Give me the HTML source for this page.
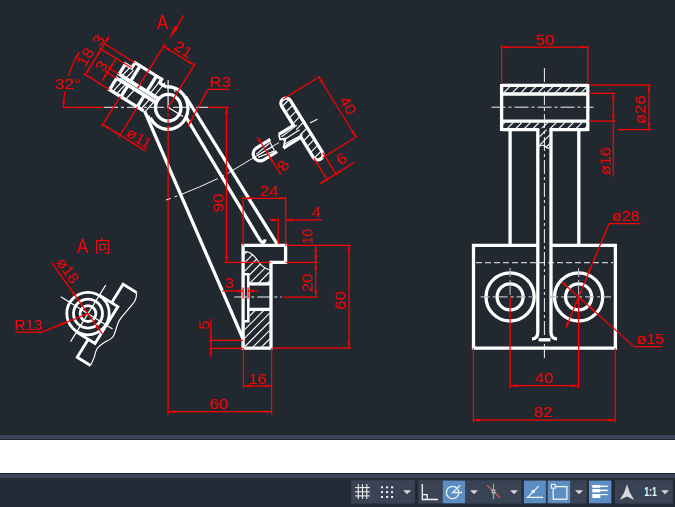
<!DOCTYPE html>
<html><head><meta charset="utf-8"><title>CAD</title>
<style>
html,body{margin:0;padding:0;background:#212830;}
body{width:675px;height:507px;overflow:hidden;position:relative;font-family:"Liberation Sans","Noto Sans CJK SC",sans-serif;}
#scr{position:absolute;left:0;top:434.8px;width:675px;height:3.9px;background:#3c4557;}
#cmd{position:absolute;left:0;top:439.6px;width:675px;height:33.2px;background:#ffffff;}
#sep{position:absolute;left:0;top:472.8px;width:675px;height:1px;background:#1d232c;}
#st1{position:absolute;left:0;top:473.8px;width:675px;height:4.2px;background:#3c4557;}
#st2{position:absolute;left:0;top:478.0px;width:675px;height:28.8px;background:#232a35;}
svg{position:absolute;left:0;top:0;}
.w{stroke:#fff;stroke-width:3.3;fill:none;stroke-linejoin:miter;stroke-linecap:butt;}
.av .w{stroke-width:2.8;}
.w2{stroke:#fff;stroke-width:1.8;fill:none;}
.th{stroke:#fff;stroke-width:1.15;fill:none;}
.cg{stroke:#b9bcc0;stroke-width:1.1;fill:none;stroke-dasharray:9 3 3 3;}
.cl{stroke:#fff;stroke-width:1;fill:none;stroke-dasharray:14 3 3 3;opacity:.95;}
.cl2{stroke:#fff;stroke-width:1;fill:none;stroke-dasharray:60 4 3 4 40 4 3 4;opacity:.95;}
.hid{stroke:#fff;stroke-width:1;fill:none;stroke-dasharray:6 3;opacity:.95;}
.r{stroke:#ff0000;stroke-width:1.25;fill:none;}
.t{fill:#ff0000;font-family:"Liberation Sans",sans-serif;stroke:#212830;stroke-width:.12;paint-order:fill stroke;}
.tc{fill:#ff0000;font-family:"Liberation Sans","Noto Sans CJK SC",sans-serif;stroke:#212830;stroke-width:.12;paint-order:fill stroke;}
</style></head><body>
<div id="scr"></div><div id="cmd"></div><div id="sep"></div><div id="st1"></div><div id="st2"></div>
<svg width="675" height="507" viewBox="0 0 675 507">
<ellipse cx="168.2" cy="107.7" rx="12.7" ry="13.3" class="w"/>
<line x1="185.6" y1="96.5" x2="277.2" y2="244.2" class="w"/>
<path d="M186.0,117.0 L259.0,238.5 C261.4,243.1 264.6,243.7 265.0,239.3" class="w"/>
<line x1="144.5" y1="110.8" x2="243.6" y2="340.2" class="w" stroke-linecap="square"/>
<line x1="150.0" y1="116.8" x2="147.5" y2="117.6" class="w"/>
<path d="M166.6,87.0 L167.9,86.9 L169.1,86.9 L170.4,87.0 L171.6,87.2 L172.8,87.5 L174.0,87.9 L175.2,88.3 L176.3,88.8 L177.4,89.4 L178.5,90.0 L179.5,90.8 L180.5,91.6 L181.4,92.4 L182.3,93.4 L183.2,94.3 L183.9,95.4 L184.7,96.5 L185.3,97.6 L185.9,98.8 L186.4,100.0 L186.8,101.2 L187.2,102.5 L187.5,103.8 L187.7,105.1 L187.8,106.4 L187.9,107.7 L187.9,109.1 L187.8,110.4 L187.6,111.7 L187.4,113.0 L187.0,114.3 L186.6,115.5 L186.2,116.7 L185.6,117.9 L185.0,119.1 L184.4,120.2 L183.6,121.3 L182.8,122.3 L182.0,123.2 L181.0,124.1 L180.1,125.0 L179.1,125.7 L178.0,126.4 L176.9,127.1 L175.8,127.6 L174.6,128.1 L173.5,128.5 L172.3,128.8 L171.0,129.1 L169.8,129.2 L168.6,129.3 L167.3,129.3 L166.1,129.2 L164.9,129.0 L163.7,128.8 L162.5,128.4 L161.3,128.0 L160.1,127.5 L159.0,126.9 L157.9,126.3 L156.9,125.6 L155.9,124.8 L154.9,123.9 L154.0,123.0 L153.2,122.1 L152.4,121.0 L151.7,120.0 L151.0,118.8 L150.4,117.7" class="w"/>
<path d="M158.3,98.4 L119.2,74.2 L125.4,64.1 L131.7,68.0 L135.0,62.7 L161.7,79.2 L159.6,82.6 L162.1,84.7 L166.6,87.0" class="w"/>
<path d="M156.2,102.8 L116.6,78.3 L109.6,89.6 L143.7,110.8" class="w"/>
<line x1="140.1" y1="65.8" x2="130.6" y2="81.2" class="w"/>
<line x1="128.0" y1="85.4" x2="121.0" y2="96.7" class="w"/>
<line x1="156.5" y1="76.0" x2="146.9" y2="91.3" class="w"/>
<line x1="144.3" y1="95.5" x2="137.3" y2="106.8" class="w"/>
<line x1="120.9" y1="77.2" x2="158.3" y2="100.4" class="th"/>
<line x1="120.0" y1="78.6" x2="157.4" y2="101.7" class="th"/>
<line x1="122.8" y1="75.0" x2="129.6" y2="67.9" class="th"/>
<line x1="126.7" y1="77.4" x2="133.4" y2="70.3" class="th"/>
<line x1="150.9" y1="92.4" x2="161.0" y2="79.9" class="th"/>
<line x1="155.1" y1="95.0" x2="165.2" y2="82.6" class="th"/>
<line x1="113.7" y1="90.6" x2="121.1" y2="82.5" class="th"/>
<line x1="117.5" y1="93.0" x2="124.9" y2="84.9" class="th"/>
<line x1="126.5" y1="98.5" x2="133.9" y2="90.4" class="th"/>
<line x1="141.8" y1="108.0" x2="149.2" y2="99.9" class="th"/>
<line x1="146.0" y1="110.7" x2="153.4" y2="102.5" class="th"/>
<line x1="104.0" y1="107.3" x2="208.0" y2="107.3" class="cl"/>
<line x1="168.1" y1="80.0" x2="168.1" y2="107.3" class="th"/>
<line x1="174.8" y1="87.3" x2="174.8" y2="92.0" class="th"/>
<line x1="168.1" y1="107.3" x2="183.0" y2="116.5" class="th"/>
<line x1="62.4" y1="107.3" x2="104.0" y2="107.3" class="r"/>
<line x1="208.0" y1="107.3" x2="229.0" y2="107.3" class="r"/>
<line x1="168.1" y1="107.3" x2="168.1" y2="129.0" class="r" stroke-dasharray="4 2"/>
<line x1="168.1" y1="129.0" x2="168.1" y2="414.6" class="r"/>
<line x1="137.5" y1="88.3" x2="165.2" y2="43.7" class="r"/>
<line x1="168.1" y1="107.3" x2="195.8" y2="62.7" class="r"/>
<line x1="163.6" y1="46.3" x2="194.2" y2="65.2" class="r"/>
<polygon points="163.6,46.3 170.1,48.7 168.7,50.9" fill="#ff0000"/>
<polygon points="194.2,65.2 187.7,62.8 189.1,60.5" fill="#ff0000"/>
<text transform="translate(180.0 53.7) rotate(31.8) scale(1.1 1)" font-size="15.2" text-anchor="middle" class="t">21</text>
<line x1="184.0" y1="15.1" x2="170.1" y2="37.3" class="r"/>
<polygon points="170.1,37.3 174.6,26.0 178.3,28.3" fill="#ff0000"/>
<text transform="translate(162.0 28.7) scale(0.85 1)" font-size="19.5" text-anchor="middle" class="t">A</text>
<line x1="208.0" y1="89.4" x2="229.4" y2="89.4" class="r"/>
<line x1="208.0" y1="89.4" x2="188.0" y2="126.1" class="r"/>
<polygon points="188.0,126.1 190.1,119.5 192.4,120.8" fill="#ff0000"/>
<text transform="translate(219.8 86.6) scale(1.1 1)" font-size="15.2" text-anchor="middle" class="t">R3</text>
<path d="M63.6,107.3 L63.6,105.6 L63.7,103.9 L63.7,102.1 L63.8,100.4 L64.0,98.7 L64.1,97.0 L64.3,95.3 L64.5,93.6 L64.7,91.9" class="r"/>
<path d="M68.4,75.9 L69.1,74.0 L69.7,72.1 L70.4,70.2 L71.1,68.3 L71.9,66.5 L72.7,64.6 L73.5,62.8 L74.4,61.0 L75.3,59.2 L76.3,57.4 L77.2,55.7 L78.2,53.9 L79.3,52.2" class="r"/>
<polygon points="63.6,107.3 62.3,100.5 64.9,100.5" fill="#ff0000"/>
<polygon points="79.3,52.2 76.8,58.7 74.6,57.3" fill="#ff0000"/>
<text transform="translate(67.5 89.0) scale(1.1 1)" font-size="15.5" text-anchor="middle" class="t">32°</text>
<line x1="135.0" y1="62.7" x2="102.8" y2="42.7" class="r"/>
<line x1="131.7" y1="68.0" x2="99.5" y2="48.1" class="r"/>
<line x1="109.6" y1="89.6" x2="83.7" y2="73.6" class="r"/>
<line x1="86.0" y1="73.6" x2="108.9" y2="36.7" class="r"/>
<polygon points="85.4,74.6 87.9,68.2 90.1,69.5" fill="#ff0000"/>
<polygon points="101.2,49.1 98.7,55.6 96.5,54.2" fill="#ff0000"/>
<polygon points="104.5,43.8 107.0,37.3 109.2,38.7" fill="#ff0000"/>
<text transform="translate(89.4 59.7) rotate(-58.2) scale(1.1 1)" font-size="15.2" text-anchor="middle" class="t">18</text>
<text transform="translate(102.5 43.1) rotate(-58.2) scale(1.1 1)" font-size="15.2" text-anchor="middle" class="t">3</text>
<line x1="119.2" y1="74.2" x2="107.7" y2="67.1" class="r"/>
<line x1="116.6" y1="78.3" x2="105.2" y2="71.2" class="r"/>
<line x1="102.3" y1="80.6" x2="116.0" y2="58.5" class="r"/>
<polygon points="109.9,68.4 111.4,63.4 113.6,64.8" fill="#ff0000"/>
<polygon points="107.3,72.5 105.8,77.5 103.6,76.1" fill="#ff0000"/>
<text transform="translate(105.4 68.8) rotate(-58.2) scale(1.1 1)" font-size="15.2" text-anchor="middle" class="t">3</text>
<line x1="120.3" y1="96.3" x2="101.7" y2="126.4" class="r"/>
<line x1="137.5" y1="106.9" x2="118.9" y2="137.0" class="r"/>
<line x1="102.0" y1="124.0" x2="145.4" y2="150.9" class="r"/>
<polygon points="102.8,124.5 109.3,127.0 107.9,129.2" fill="#ff0000"/>
<polygon points="120.0,135.1 113.5,132.7 114.9,130.5" fill="#ff0000"/>
<text transform="translate(135.9 142.5) rotate(31.8) scale(1.05 1)" font-size="15.2" text-anchor="middle" class="t">ø11</text>
<path d="M243.1,348.2 L243.1,245.4 L285.6,245.4 L285.6,262.4 L271.0,262.4 L271.0,348.2 L243.1,348.2 Z" class="w"/>
<path d="M243.1,274.3 L248.3,274.3 L248.3,321.3 L244.1,321.3" class="w" style="stroke-width:2.5"/>
<line x1="248.1" y1="283.9" x2="271.0" y2="283.9" class="w"/>
<line x1="248.1" y1="309.4" x2="271.0" y2="309.4" class="w"/>
<clipPath id="h1"><path d="M244.6,251.5 C250,251.5 254,255 258,261 C262,267 266,269 269.5,269.8 L269.5,282.4 L249.6,282.4 L249.6,272.8 L244.6,272.8 Z"/></clipPath>
<clipPath id="h2"><path d="M249.6,310.9 L269.5,310.9 L269.5,346.7 L244.6,346.7 L244.6,322.8 L249.6,322.8 Z"/></clipPath>
<g clip-path="url(#h1)"><line x1="206.0" y1="284.0" x2="245.0" y2="245.0" class="th"/><line x1="214.6" y1="284.0" x2="253.6" y2="245.0" class="th"/><line x1="223.2" y1="284.0" x2="262.2" y2="245.0" class="th"/><line x1="231.8" y1="284.0" x2="270.8" y2="245.0" class="th"/><line x1="240.4" y1="284.0" x2="279.4" y2="245.0" class="th"/><line x1="249.0" y1="284.0" x2="288.0" y2="245.0" class="th"/><line x1="257.6" y1="284.0" x2="296.6" y2="245.0" class="th"/><line x1="266.2" y1="284.0" x2="305.2" y2="245.0" class="th"/></g>
<g clip-path="url(#h2)"><line x1="208.0" y1="349.0" x2="248.0" y2="309.0" class="th"/><line x1="216.6" y1="349.0" x2="256.6" y2="309.0" class="th"/><line x1="225.2" y1="349.0" x2="265.2" y2="309.0" class="th"/><line x1="233.8" y1="349.0" x2="273.8" y2="309.0" class="th"/><line x1="242.4" y1="349.0" x2="282.4" y2="309.0" class="th"/><line x1="251.0" y1="349.0" x2="291.0" y2="309.0" class="th"/><line x1="259.6" y1="349.0" x2="299.6" y2="309.0" class="th"/><line x1="268.2" y1="349.0" x2="308.2" y2="309.0" class="th"/></g>
<path d="M244.6,251.5 C250,251.5 254,255 258,261 C262,267 266,269 270,270" class="th"/>
<line x1="234.3" y1="297.0" x2="281.7" y2="297.0" class="cl"/>
<line x1="283.5" y1="297.0" x2="317.6" y2="297.0" class="r"/>
<path d="M279,142.5 L224,175.5 Q195,190 166,200" class="cl2"/>
<line x1="226.5" y1="107.3" x2="226.5" y2="262.4" class="r"/>
<polygon points="226.5,107.3 227.8,114.1 225.2,114.1" fill="#ff0000"/>
<polygon points="226.5,262.4 225.2,255.6 227.8,255.6" fill="#ff0000"/>
<line x1="224.4" y1="262.4" x2="243.1" y2="262.4" class="r"/>
<line x1="243.1" y1="262.4" x2="270.6" y2="262.4" class="r"/>
<line x1="285.6" y1="262.4" x2="317.6" y2="262.4" class="r"/>
<text transform="translate(222.5 203.0) rotate(-90.0) scale(1.1 1)" font-size="15.2" text-anchor="middle" class="t">90</text>
<line x1="243.1" y1="196.2" x2="243.1" y2="245.4" class="r"/>
<line x1="285.7" y1="196.2" x2="285.7" y2="245.4" class="r"/>
<line x1="243.1" y1="198.3" x2="285.7" y2="198.3" class="r"/>
<polygon points="243.1,198.3 249.9,197.0 249.9,199.6" fill="#ff0000"/>
<polygon points="285.7,198.3 278.9,199.6 278.9,197.0" fill="#ff0000"/>
<text transform="translate(268.7 196.0) scale(1.1 1)" font-size="15.2" text-anchor="middle" class="t">24</text>
<line x1="269.4" y1="219.9" x2="278.2" y2="219.9" class="r"/>
<polygon points="278.2,219.9 271.4,221.2 271.4,218.6" fill="#ff0000"/>
<line x1="285.7" y1="219.9" x2="322.0" y2="219.9" class="r"/>
<polygon points="285.7,219.9 292.5,218.6 292.5,221.2" fill="#ff0000"/>
<line x1="278.2" y1="218.0" x2="278.2" y2="244.0" class="r"/>
<text transform="translate(316.0 217.2) scale(1.1 1)" font-size="15.2" text-anchor="middle" class="t">4</text>
<line x1="286.5" y1="245.4" x2="350.9" y2="245.4" class="r"/>
<line x1="315.7" y1="245.4" x2="315.7" y2="297.0" class="r"/>
<polygon points="315.7,245.4 317.0,252.2 314.4,252.2" fill="#ff0000"/>
<polygon points="315.7,262.4 314.4,255.6 317.0,255.6" fill="#ff0000"/>
<polygon points="315.7,262.4 317.0,269.2 314.4,269.2" fill="#ff0000"/>
<polygon points="315.7,297.0 314.4,290.2 317.0,290.2" fill="#ff0000"/>
<text transform="translate(312.0 244.0) rotate(-90.0) scale(0.88 1)" font-size="15.2" text-anchor="start" class="t">10</text>
<text transform="translate(311.8 283.0) rotate(-90.0) scale(1.1 1)" font-size="15.2" text-anchor="middle" class="t">20</text>
<line x1="349.0" y1="245.4" x2="349.0" y2="348.1" class="r"/>
<polygon points="349.0,245.4 350.3,252.2 347.7,252.2" fill="#ff0000"/>
<polygon points="349.0,348.1 347.7,341.3 350.3,341.3" fill="#ff0000"/>
<line x1="272.4" y1="348.1" x2="350.9" y2="348.1" class="r"/>
<text transform="translate(345.1 300.5) rotate(-90.0) scale(1.1 1)" font-size="15.2" text-anchor="middle" class="t">60</text>
<line x1="222.4" y1="290.9" x2="243.1" y2="290.9" class="r"/>
<polygon points="243.1,290.9 238.1,292.2 238.1,289.6" fill="#ff0000"/>
<line x1="248.1" y1="290.9" x2="258.0" y2="290.9" class="r"/>
<polygon points="248.1,290.9 253.1,289.6 253.1,292.2" fill="#ff0000"/>
<line x1="243.1" y1="287.5" x2="243.1" y2="298.5" class="r"/>
<line x1="248.1" y1="287.5" x2="248.1" y2="298.5" class="r"/>
<text transform="translate(229.0 288.3) scale(1.1 1)" font-size="15.2" text-anchor="middle" class="t">3</text>
<line x1="210.9" y1="318.9" x2="210.9" y2="357.4" class="r"/>
<line x1="209.4" y1="340.3" x2="243.1" y2="340.3" class="r"/>
<line x1="209.4" y1="348.3" x2="243.1" y2="348.3" class="r"/>
<polygon points="210.9,340.3 209.6,335.3 212.2,335.3" fill="#ff0000"/>
<polygon points="210.9,348.3 212.2,353.3 209.6,353.3" fill="#ff0000"/>
<text transform="translate(208.5 325.0) rotate(-90.0) scale(1.1 1)" font-size="15.2" text-anchor="middle" class="t">5</text>
<line x1="243.5" y1="348.2" x2="243.5" y2="388.6" class="r"/>
<line x1="271.6" y1="348.2" x2="271.6" y2="414.6" class="r"/>
<line x1="243.5" y1="386.0" x2="271.6" y2="386.0" class="r"/>
<polygon points="243.5,386.0 250.3,384.7 250.3,387.3" fill="#ff0000"/>
<polygon points="271.6,386.0 264.8,387.3 264.8,384.7" fill="#ff0000"/>
<text transform="translate(257.2 383.6) scale(1.05 1)" font-size="15.2" text-anchor="middle" class="t">16</text>
<line x1="168.1" y1="411.6" x2="271.6" y2="411.6" class="r"/>
<polygon points="168.1,411.6 174.9,410.3 174.9,412.9" fill="#ff0000"/>
<polygon points="271.6,411.6 264.8,412.9 264.8,410.3" fill="#ff0000"/>
<text transform="translate(218.5 409.4) scale(1.1 1)" font-size="15.2" text-anchor="middle" class="t">60</text>
<path d="M278.8,134.4 L293.5,125.3 L281.6,106.2 A5.2,5.2 0 0 1 290.5,100.7 L322.2,151.8 A5.2,5.2 0 0 1 313.3,157.3 L300.9,137.2 L283.4,148.0" class="w"/>
<path d="M278.8,134.4 L280.1,139.4 L285.4,138.5 L283.4,148.0" class="w2"/>
<line x1="281.6" y1="136.7" x2="296.9" y2="125.1" class="th"/>
<line x1="282.9" y1="140.4" x2="299.7" y2="129.7" class="th"/>
<line x1="284.2" y1="144.2" x2="302.7" y2="134.4" class="th"/>
<clipPath id="hb"><path d="M281.6,106.2 A5.2,5.2 0 0 1 290.5,100.7 L322.2,151.8 A5.2,5.2 0 0 1 313.3,157.3 Z"/></clipPath>
<g clip-path="url(#hb)"><line x1="200.0" y1="170" x2="280.0" y2="90" class="th"/><line x1="209.3" y1="170" x2="289.3" y2="90" class="th"/><line x1="218.6" y1="170" x2="298.6" y2="90" class="th"/><line x1="227.9" y1="170" x2="307.9" y2="90" class="th"/><line x1="237.2" y1="170" x2="317.2" y2="90" class="th"/><line x1="246.5" y1="170" x2="326.5" y2="90" class="th"/><line x1="255.8" y1="170" x2="335.8" y2="90" class="th"/><line x1="265.1" y1="170" x2="345.1" y2="90" class="th"/><line x1="274.4" y1="170" x2="354.4" y2="90" class="th"/><line x1="283.7" y1="170" x2="363.7" y2="90" class="th"/><line x1="293.0" y1="170" x2="373.0" y2="90" class="th"/><line x1="302.3" y1="170" x2="382.3" y2="90" class="th"/><line x1="311.6" y1="170" x2="391.6" y2="90" class="th"/><line x1="320.9" y1="170" x2="400.9" y2="90" class="th"/></g>
<line x1="310.0" y1="123.0" x2="317.4" y2="119.3" class="th"/>
<path d="M270.3,139.4 L256.0,148.3 A7.0,7.0 0 0 0 263.4,160.1 L277.0,151.7" class="w"/>
<line x1="269.3" y1="140.9" x2="274.5" y2="150.7" class="th"/>
<line x1="256.3" y1="154.4" x2="269.4" y2="143.3" class="th"/>
<line x1="257.2" y1="155.8" x2="271.8" y2="147.1" class="th"/>
<line x1="258.1" y1="157.4" x2="274.2" y2="151.0" class="th"/>
<line x1="257.3" y1="137.0" x2="280.7" y2="174.3" class="r"/>
<polygon points="262.0,144.5 258.0,140.6 260.2,139.2" fill="#ff0000"/>
<polygon points="269.4,156.4 273.4,160.4 271.2,161.8" fill="#ff0000"/>
<text transform="translate(287.3 168.2) rotate(-58.2) scale(1.1 1)" font-size="15.2" text-anchor="middle" class="t">8</text>
<line x1="283.3" y1="99.0" x2="320.1" y2="76.2" class="r"/>
<line x1="322.6" y1="157.7" x2="357.3" y2="136.2" class="r"/>
<line x1="318.8" y1="77.0" x2="356.0" y2="137.0" class="r"/>
<polygon points="318.8,77.0 323.5,82.1 321.3,83.4" fill="#ff0000"/>
<polygon points="356.0,137.0 351.3,131.9 353.6,130.5" fill="#ff0000"/>
<text transform="translate(343.1 108.2) rotate(58.2) scale(1.1 1)" font-size="15.2" text-anchor="middle" class="t">40</text>
<line x1="313.9" y1="158.2" x2="327.8" y2="180.7" class="r"/>
<line x1="322.7" y1="152.7" x2="336.7" y2="175.2" class="r"/>
<line x1="319.8" y1="183.9" x2="354.6" y2="162.3" class="r"/>
<polygon points="327.0,179.4 323.1,183.4 321.7,181.2" fill="#ff0000"/>
<polygon points="335.9,173.9 339.9,169.9 341.2,172.1" fill="#ff0000"/>
<text transform="translate(344.0 163.3) rotate(-31.8) scale(1.1 1)" font-size="15.2" text-anchor="middle" class="t">6</text>
<g class="av">
<circle cx="88.0" cy="313.6" r="7.9" class="w"/>
<circle cx="88.0" cy="313.6" r="14.5" class="w"/>
<circle cx="88.0" cy="313.6" r="21.2" class="w"/>
<path d="M99.4,295.2 L117.9,306.6 L95.0,343.5 L76.6,332.0" class="w"/>
<path d="M111.6,302.7 L123.1,284.2 L136.7,292.6" class="w"/>
<path d="M88.3,339.3 L77.2,357.2 L90.5,365.5" class="w"/>
<path d="M136.6,292.8 C136.4,294.0 136.7,297.1 135.3,299.9 C134.0,302.6 131.1,305.8 128.4,309.2 C125.7,312.7 121.8,316.0 119.2,320.6 C116.6,325.2 115.5,333.1 113.0,336.8 C110.5,340.4 106.9,340.5 104.2,342.5 C101.5,344.5 98.7,346.2 97.0,348.8 C95.2,351.5 94.9,355.6 93.8,358.4 C92.7,361.1 91.1,364.3 90.5,365.5" class="th"/>
<line x1="105.7" y1="285.1" x2="70.6" y2="341.6" class="th"/>
<line x1="60.8" y1="296.7" x2="112.6" y2="328.9" class="th"/>
<line x1="52.1" y1="263.1" x2="102.4" y2="333.8" class="r"/>
<polygon points="76.7,297.7 71.7,292.9 73.8,291.4" fill="#ff0000"/>
<polygon points="100.4,331.1 95.5,326.3 97.6,324.8" fill="#ff0000"/>
<text transform="translate(63.2 273.6) rotate(54.6) scale(1.05 1)" font-size="15.2" text-anchor="middle" class="t">ø18</text>
<line x1="15.0" y1="332.2" x2="41.7" y2="332.2" class="r"/>
<line x1="41.7" y1="332.2" x2="88.0" y2="313.6" class="r"/>
<polygon points="67.1,322.0 61.3,325.7 60.3,323.3" fill="#ff0000"/>
<text transform="translate(28.0 329.6) scale(1.0 1)" font-size="15.2" text-anchor="middle" class="t">R13</text>
<text transform="translate(82.2 253.0) scale(0.85 1)" font-size="19.8" text-anchor="middle" class="t">A</text>
<text transform="translate(102.0 252.3) scale(1.0 1)" font-size="16.5" text-anchor="middle" class="tc">向</text>
</g>
<line x1="501.6" y1="85.4" x2="587.8" y2="85.4" class="w"/>
<line x1="501.6" y1="94.0" x2="587.8" y2="94.0" class="w"/>
<line x1="501.6" y1="121.2" x2="587.8" y2="121.2" class="w"/>
<line x1="501.6" y1="129.6" x2="539.3" y2="129.6" class="w"/>
<line x1="549.5" y1="129.6" x2="587.8" y2="129.6" class="w"/>
<line x1="501.6" y1="84.0" x2="501.6" y2="131.0" class="w"/>
<line x1="587.8" y1="84.0" x2="587.8" y2="131.0" class="w"/>
<clipPath id="r1"><rect x="503" y="86.8" width="83.4" height="5.8"/></clipPath>
<clipPath id="r2"><rect x="503" y="122.6" width="83.4" height="5.6"/></clipPath>
<clipPath id="r3"><path d="M539.5,129 L549.6,129 L549.6,147 Q547,149 545.5,146.5 Q543,144 539.5,146.5 Z"/></clipPath>
<g clip-path="url(#r1)"><line x1="493.9" y1="94.0" x2="502.5" y2="85.4" class="th"/><line x1="502.5" y1="94.0" x2="511.1" y2="85.4" class="th"/><line x1="511.1" y1="94.0" x2="519.7" y2="85.4" class="th"/><line x1="519.7" y1="94.0" x2="528.3" y2="85.4" class="th"/><line x1="528.3" y1="94.0" x2="536.9" y2="85.4" class="th"/><line x1="536.9" y1="94.0" x2="545.5" y2="85.4" class="th"/><line x1="545.5" y1="94.0" x2="554.1" y2="85.4" class="th"/><line x1="554.1" y1="94.0" x2="562.7" y2="85.4" class="th"/><line x1="562.7" y1="94.0" x2="571.3" y2="85.4" class="th"/><line x1="571.3" y1="94.0" x2="579.9" y2="85.4" class="th"/><line x1="579.9" y1="94.0" x2="588.5" y2="85.4" class="th"/><line x1="588.5" y1="94.0" x2="597.1" y2="85.4" class="th"/></g>
<g clip-path="url(#r2)"><line x1="497.6" y1="129.6" x2="506.0" y2="121.2" class="th"/><line x1="506.2" y1="129.6" x2="514.6" y2="121.2" class="th"/><line x1="514.8" y1="129.6" x2="523.2" y2="121.2" class="th"/><line x1="523.4" y1="129.6" x2="531.8" y2="121.2" class="th"/><line x1="532.0" y1="129.6" x2="540.4" y2="121.2" class="th"/><line x1="540.6" y1="129.6" x2="549.0" y2="121.2" class="th"/><line x1="549.2" y1="129.6" x2="557.6" y2="121.2" class="th"/><line x1="557.8" y1="129.6" x2="566.2" y2="121.2" class="th"/><line x1="566.4" y1="129.6" x2="574.8" y2="121.2" class="th"/><line x1="575.0" y1="129.6" x2="583.4" y2="121.2" class="th"/><line x1="583.6" y1="129.6" x2="592.0" y2="121.2" class="th"/></g>
<g clip-path="url(#r3)"><line x1="517.6" y1="150.0" x2="538.0" y2="129.6" class="th"/><line x1="526.2" y1="150.0" x2="546.6" y2="129.6" class="th"/><line x1="534.8" y1="150.0" x2="555.2" y2="129.6" class="th"/><line x1="543.4" y1="150.0" x2="563.8" y2="129.6" class="th"/><line x1="552.0" y1="150.0" x2="572.4" y2="129.6" class="th"/></g>
<path d="M539,146.5 Q543,144 545.5,146.5 Q547,149 550,147.5" class="th"/>
<line x1="510.1" y1="129.6" x2="510.1" y2="245.4" class="w"/>
<line x1="578.8" y1="129.6" x2="578.8" y2="245.4" class="w"/>
<path d="M537.8,129.6 L537.8,332 Q537.8,338.9 532,338.9" class="w"/>
<path d="M551.0,129.6 L551.0,332 Q551.0,338.9 557,338.9" class="w"/>
<path d="M538.6,339.8 L550.4,339.8" class="w" stroke-linecap="round"/>
<path d="M537.8,245.4 L473.5,245.4 L473.5,348.2 L615.4,348.2 L615.4,245.4 L551.0,245.4" class="w"/>
<line x1="476.0" y1="262.7" x2="613.0" y2="262.7" class="hid"/>
<circle cx="510.1" cy="296.9" r="24.1" class="w"/>
<circle cx="510.1" cy="296.9" r="13.0" class="w"/>
<line x1="480.6" y1="296.9" x2="533.6" y2="296.9" class="cg"/>
<line x1="510.1" y1="268.0" x2="510.1" y2="296.9" class="cg"/>
<circle cx="578.6" cy="296.9" r="24.1" class="w"/>
<circle cx="578.6" cy="296.9" r="13.0" class="w"/>
<line x1="549.1" y1="296.9" x2="611.1" y2="296.9" class="cg"/>
<line x1="578.6" y1="268.0" x2="578.6" y2="296.9" class="cg"/>
<line x1="544.4" y1="68.0" x2="544.4" y2="358.5" class="cl"/>
<line x1="491.5" y1="107.2" x2="593.5" y2="107.2" class="cl"/>
<line x1="501.6" y1="45.0" x2="501.6" y2="83.5" class="r"/>
<line x1="587.8" y1="45.0" x2="587.8" y2="83.5" class="r"/>
<line x1="501.6" y1="47.2" x2="587.8" y2="47.2" class="r"/>
<polygon points="501.6,47.2 508.4,45.9 508.4,48.5" fill="#ff0000"/>
<polygon points="587.8,47.2 581.0,48.5 581.0,45.9" fill="#ff0000"/>
<text transform="translate(544.5 44.7) scale(1.1 1)" font-size="15.2" text-anchor="middle" class="t">50</text>
<line x1="589.3" y1="85.2" x2="650.9" y2="85.2" class="r"/>
<line x1="618.0" y1="129.7" x2="650.9" y2="129.7" class="r"/>
<line x1="649.1" y1="85.2" x2="649.1" y2="129.7" class="r"/>
<polygon points="649.1,85.2 650.4,92.0 647.8,92.0" fill="#ff0000"/>
<polygon points="649.1,129.7 647.8,122.9 650.4,122.9" fill="#ff0000"/>
<text transform="translate(645.3 109.7) rotate(-90.0) scale(1.1 1)" font-size="15.2" text-anchor="middle" class="t">ø26</text>
<line x1="589.3" y1="93.4" x2="615.7" y2="93.4" class="r"/>
<line x1="589.3" y1="121.1" x2="615.7" y2="121.1" class="r"/>
<line x1="613.3" y1="93.4" x2="613.3" y2="176.6" class="r"/>
<polygon points="613.3,93.4 614.6,100.2 612.0,100.2" fill="#ff0000"/>
<polygon points="613.3,121.1 612.0,114.3 614.6,114.3" fill="#ff0000"/>
<text transform="translate(609.7 161.2) rotate(-90.0) scale(1.08 1)" font-size="15.2" text-anchor="middle" class="t">ø16</text>
<line x1="609.0" y1="223.6" x2="640.6" y2="223.6" class="r"/>
<line x1="609.0" y1="223.6" x2="566.0" y2="327.4" class="r"/>
<polygon points="587.8,274.6 589.2,267.9 591.6,268.9" fill="#ff0000"/>
<polygon points="569.4,319.2 568.0,325.9 565.6,324.9" fill="#ff0000"/>
<text transform="translate(625.5 221.2) scale(1.05 1)" font-size="15.2" text-anchor="middle" class="t">ø28</text>
<line x1="562.2" y1="282.2" x2="634.0" y2="346.6" class="r"/>
<line x1="634.0" y1="346.6" x2="662.3" y2="346.6" class="r"/>
<polygon points="588.3,305.6 594.2,309.2 592.5,311.1" fill="#ff0000"/>
<polygon points="568.9,288.2 563.0,284.6 564.7,282.7" fill="#ff0000"/>
<text transform="translate(650.0 344.4) scale(1.05 1)" font-size="15.2" text-anchor="middle" class="t">ø15</text>
<line x1="510.1" y1="296.9" x2="510.1" y2="388.3" class="r"/>
<line x1="578.6" y1="296.9" x2="578.6" y2="388.3" class="r"/>
<line x1="510.1" y1="385.7" x2="578.6" y2="385.7" class="r"/>
<polygon points="510.1,385.7 516.9,384.4 516.9,387.0" fill="#ff0000"/>
<polygon points="578.6,385.7 571.8,387.0 571.8,384.4" fill="#ff0000"/>
<text transform="translate(543.8 383.0) scale(1.1 1)" font-size="15.2" text-anchor="middle" class="t">40</text>
<line x1="473.4" y1="348.2" x2="473.4" y2="422.2" class="r"/>
<line x1="615.3" y1="348.2" x2="615.3" y2="422.2" class="r"/>
<line x1="473.4" y1="420.1" x2="615.3" y2="420.1" class="r"/>
<polygon points="473.4,420.1 480.2,418.8 480.2,421.4" fill="#ff0000"/>
<polygon points="615.3,420.1 608.5,421.4 608.5,418.8" fill="#ff0000"/>
<text transform="translate(542.8 417.1) scale(1.1 1)" font-size="15.2" text-anchor="middle" class="t">82</text>
<rect x="351.2" y="480.2" width="63.7" height="23.4" fill="#3a4353"/>
<rect x="418.3" y="480.2" width="103.4" height="23.4" fill="#3a4353"/>
<rect x="523.9" y="480.2" width="63" height="23.4" fill="#3a4353"/>
<rect x="588.8" y="480.2" width="22.5" height="23.4" fill="#3a4353"/>
<rect x="615" y="480.2" width="58" height="23.4" fill="#3a4353"/>
<rect x="442.9" y="480.7" width="22.2" height="22.5" fill="#5b8ec4"/>
<rect x="523.9" y="480.7" width="21.9" height="22.5" fill="#5b8ec4"/>
<rect x="547.9" y="480.7" width="22.2" height="22.5" fill="#5b8ec4"/>
<rect x="589" y="480.7" width="22.3" height="22.5" fill="#5b8ec4"/>
<line x1="358.3" y1="484.1" x2="358.3" y2="498.9" stroke="#f2f3f5" stroke-width="1.05" fill="none"/>
<line x1="362.5" y1="484.1" x2="362.5" y2="498.9" stroke="#f2f3f5" stroke-width="1.05" fill="none"/>
<line x1="366.8" y1="484.1" x2="366.8" y2="498.9" stroke="#f2f3f5" stroke-width="1.05" fill="none"/>
<line x1="355.1" y1="487.6" x2="369.9" y2="487.6" stroke="#f2f3f5" stroke-width="1.05" fill="none"/>
<line x1="355.1" y1="491.8" x2="369.9" y2="491.8" stroke="#f2f3f5" stroke-width="1.05" fill="none"/>
<line x1="355.1" y1="495.9" x2="369.9" y2="495.9" stroke="#f2f3f5" stroke-width="1.05" fill="none"/>
<rect x="381" y="486.3" width="2" height="2" fill="#f2f3f5"/>
<rect x="381" y="491.1" width="2" height="2" fill="#f2f3f5"/>
<rect x="381" y="496" width="2" height="2" fill="#f2f3f5"/>
<rect x="386.1" y="486.3" width="2" height="2" fill="#f2f3f5"/>
<rect x="386.1" y="491.1" width="2" height="2" fill="#f2f3f5"/>
<rect x="386.1" y="496" width="2" height="2" fill="#f2f3f5"/>
<rect x="391.1" y="486.3" width="2" height="2" fill="#f2f3f5"/>
<rect x="391.1" y="491.1" width="2" height="2" fill="#f2f3f5"/>
<rect x="391.1" y="496" width="2" height="2" fill="#f2f3f5"/>
<polygon points="403.1,490.3 411.2,490.3 407.15,494.2" fill="#d4d6da"/>
<path d="M422.3,484.1 V499.5 H438 M422.3,494.7 H427.2 V499.5" stroke="#f2f3f5" stroke-width="1.3" fill="none"/>
<circle cx="452.6" cy="492.5" r="6.2" stroke="#f2f3f5" stroke-width="1.3" fill="none"/><path d="M462.1,492.5 H452.6 L460.2,485.1" stroke="#f2f3f5" stroke-width="1.3" fill="none"/>
<polygon points="470.1,490.3 478,490.3 474.05,494.2" fill="#d4d6da"/>
<line x1="493.5" y1="484" x2="493.5" y2="499.2" stroke="#3ddc6a" stroke-width="1.3"/>
<line x1="487.1" y1="485.1" x2="499.9" y2="497.7" stroke="#e8505a" stroke-width="1.3"/>
<rect x="492.2" y="490.2" width="2.6" height="2.6" fill="#212830" stroke="#fff" stroke-width="0.8"/>
<polygon points="510.1,490.3 518,490.3 514.05,494.2" fill="#d4d6da"/>
<path d="M538.7,486.1 L527.6,497.4 H543.1" stroke="#f2f3f5" stroke-width="1.3" fill="none"/><rect x="531.7" y="490" width="3" height="3" fill="#fff"/>
<rect x="553.2" y="486.6" width="13.7" height="12.6" stroke="#f2f3f5" stroke-width="1.3" fill="none"/><rect x="551.4" y="484.4" width="3.8" height="3.8" fill="#5b8ec4" stroke="#f2f3f5" stroke-width="1.1"/>
<polygon points="575,490.3 583.1,490.3 579.05,494.2" fill="#d4d6da"/>
<rect x="592.3" y="485" width="8" height="2.8" fill="#fff"/><rect x="600.3" y="485.6" width="7.4" height="1.4" fill="#fff"/>
<rect x="592.3" y="489" width="8" height="3.4" fill="#fff"/><rect x="600.3" y="489.6" width="7.4" height="1.6" fill="#fff"/>
<rect x="592.3" y="494" width="8" height="4" fill="#fff"/><rect x="600.3" y="494" width="7.4" height="1.2" fill="#fff"/>
<path d="M627,484.2 L629.8,492.6 L634.3,500 L627,496.6 L619.7,500 L624.2,492.6 Z" fill="#d7d9dc"/>
<text x="644.3" y="496.2" font-size="12" font-weight="bold" fill="#f4f6f8" font-family="Liberation Sans, sans-serif" textLength="12.4" lengthAdjust="spacingAndGlyphs">1:1</text>
<polygon points="661,490.3 669,490.3 665.0,494.2" fill="#d4d6da"/>
</svg>
</body></html>
